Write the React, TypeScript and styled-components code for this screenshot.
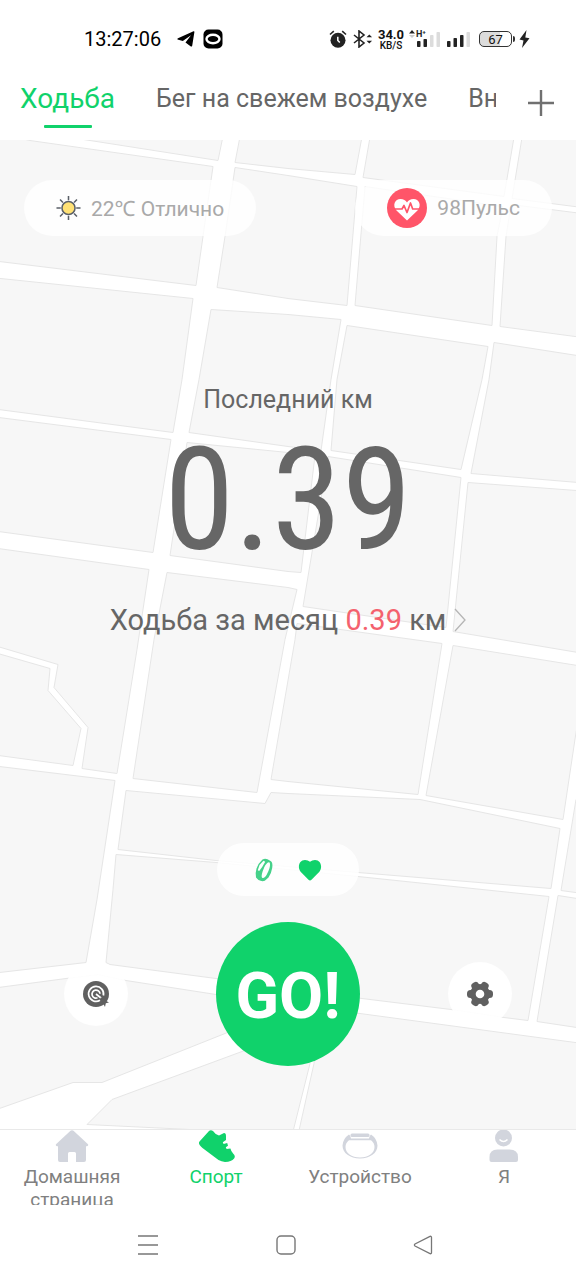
import React from "react";
import styled, { createGlobalStyle } from "styled-components";

const green = "#10d26b";
const gray = "#666666";

const GlobalStyle = createGlobalStyle`
  * { box-sizing: border-box; }
  body { margin: 0; background: #fff; font-family: Roboto, "Noto Sans", sans-serif; color: ${gray}; }
  button { border: 0; padding: 0; margin: 0; background: none; font: inherit; color: inherit; cursor: pointer; }
  a { color: inherit; text-decoration: none; }
  svg { display: block; flex: none; }
`;

const Screen = styled.div`
  display: flex;
  flex-direction: column;
  min-height: 100vh;
`;

const StatusBar = styled.header`
  display: flex;
  align-items: center;
  justify-content: space-between;
  height: 78px;
  padding: 0 46px 0 84px;
  color: #111;
`;

const StatusGroup = styled.div<{ $gap: number }>`
  display: flex;
  align-items: center;
  gap: ${(p) => p.$gap}px;
`;

const Clock = styled.time`
  font-size: 20px;
  line-height: 24px;
  margin-right: 8px;
  color: #000;
`;

const Speed = styled.div`
  display: flex;
  flex-direction: column;
  align-items: center;
  width: 28px;
  font-size: 10px;
  line-height: 10px;
  font-weight: 500;
`;

const SpeedValue = styled.span`
  font-size: 13px;
  line-height: 13px;
  font-weight: 700;
`;

const Battery = styled.div`
  display: flex;
  align-items: center;
  gap: 1px;
  margin-left: 4px;
  &::after {
    content: "";
    width: 2px;
    height: 6px;
    background: #333;
    border-radius: 0 2px 2px 0;
  }
`;

const BatteryBody = styled.div`
  width: 33px;
  height: 16px;
  border: 1px solid #333;
  border-radius: 5px;
  background: linear-gradient(90deg, #dcdcdc 64%, #fff 64%);
  font-size: 13px;
  line-height: 15px;
  text-align: center;
`;

const TabBar = styled.div`
  display: flex;
  height: 62px;
  padding: 0 22px 0 20px;
`;

const Tabs = styled.nav`
  display: flex;
  flex: 1;
  min-width: 0;
  gap: 41px;
  overflow: hidden;
  white-space: nowrap;
`;

const Tab = styled.button<{ $active?: boolean }>`
  display: flex;
  flex: none;
  flex-direction: column;
  align-items: center;
  font-size: ${(p) => (p.$active ? 28 : 25)}px;
  line-height: 42px;
  color: ${(p) => (p.$active ? green : gray)};
  &::after {
    content: "";
    width: 48px;
    height: 3px;
    margin-top: 5px;
    border-radius: 1px;
    background: ${(p) => (p.$active ? green : "transparent")};
  }
`;

const AddButton = styled.button`
  display: flex;
  align-items: center;
  justify-content: flex-end;
  width: 58px;
  height: 50px;
`;

const MapArea = styled.main`
  position: relative;
  display: flex;
  flex: 1;
  flex-direction: column;
  border-bottom: 1px solid #e9e9e9;
  overflow: hidden;
`;

const MapBackdrop = styled.svg`
  position: absolute;
  inset: 0;
  width: 100%;
  height: 100%;
`;

const Overlay = styled.div`
  position: relative;
  display: flex;
  flex: 1;
  flex-direction: column;
  padding: 40px 24px 63px;
`;

const PillRow = styled.div`
  display: flex;
  justify-content: space-between;
`;

const Pill = styled.div`
  display: flex;
  align-items: center;
  gap: 10px;
  height: 56px;
  padding: 0 32px;
  border-radius: 28px;
  background: rgba(255, 255, 255, 0.8);
  font-size: 21px;
  color: #a9a9a9;
`;

const Summary = styled.section`
  display: flex;
  flex-direction: column;
  align-items: center;
  padding-top: 146px;
`;

const SummaryTitle = styled.h1`
  margin: 0;
  font-size: 25px;
  font-weight: 400;
  line-height: 36px;
`;

const Distance = styled.div`
  font-family: "Roboto Condensed", "Liberation Sans Narrow", Roboto, sans-serif;
  font-size: 142px;
  line-height: 166px;
`;

const MonthLink = styled.a`
  display: flex;
  align-items: center;
  gap: 8px;
  margin-top: 18px;
  font-size: 29px;
  line-height: 36px;
`;

const Accent = styled.span`
  color: #f4626e;
`;

const Actions = styled.section`
  display: flex;
  flex-direction: column;
  align-items: center;
  gap: 26px;
  margin-top: auto;
`;

const DevicePill = styled.div`
  display: flex;
  align-items: center;
  justify-content: center;
  gap: 24px;
  width: 142px;
  height: 53px;
  border-radius: 27px;
  background: rgba(255, 255, 255, 0.85);
`;

const ActionRow = styled.div`
  display: flex;
  align-items: center;
  justify-content: space-between;
  width: 100%;
  padding: 0 40px;
`;

const RoundButton = styled.button`
  display: flex;
  align-items: center;
  justify-content: center;
  width: 64px;
  height: 64px;
  border-radius: 50%;
  background: rgba(255, 255, 255, 0.92);
`;

const GoButton = styled.button`
  width: 144px;
  height: 144px;
  padding-top: 6px;
  border-radius: 50%;
  background: ${green};
  color: #fff;
  font-size: 64px;
  font-weight: 700;
  line-height: 138px;
`;

const BottomNav = styled.nav`
  display: grid;
  grid-template-columns: repeat(4, 1fr);
  height: 75px;
  overflow: hidden;
`;

const NavItem = styled.a<{ $active?: boolean }>`
  display: flex;
  flex-direction: column;
  align-items: center;
  gap: 3px;
  padding: 0 16px;
  font-size: 19px;
  line-height: 23px;
  text-align: center;
  color: ${(p) => (p.$active ? green : "#808080")};
`;

const SystemNav = styled.footer`
  display: flex;
  justify-content: center;
  height: 75px;
  padding: 0 5px 0 0;
`;

const SystemButton = styled.button`
  display: flex;
  align-items: center;
  justify-content: center;
  width: 24%;
  padding-top: 5px;
`;

const blocks = [
  "90,141 30,132 224,132 218,161 90,141",
  "241,132 235,163 288,169 355,175 363,132",
  "371,132 515,132 504,197 363,178",
  "523,132 590,132 590,209 512,199",
  "-9,132 30,141 213,167 203,237 196,286 -9,261",
  "235,168 288,176 357,187 347,306 288,299 217,288 225,237",
  "365,187 503,207 497,237 492,326 355,306",
  "511,205 590,215 590,339 500,327 506,237",
  "-9,278 193,299 182,380 173,433 -9,409",
  "211,310 288,315 341,320 331,380 321,451 288,447 189,433 199,380",
  "347,326 488,347 482,380 461,470 331,451 337,380",
  "494,343 590,358 590,484 471,474 489,380",
  "-9,417 171,440 153,553 -9,531",
  "187,443 288,453 315,456 301,573 288,572 170,556",
  "328,457 461,478 446,628 303,607",
  "468,483 590,492 590,655 453,632",
  "-9,548 149,570 137,650 117,774 82,769 88,728 54,688 58,665 -9,645",
  "-9,652 50,669 48,691 81,729 73,766 -9,755",
  "167,573 288,588 297,590 285,640 257,793 133,779 154,640",
  "297,624 442,644 418,795 288,782 271,780 295,640",
  "453,646 590,668 576,733 563,820 426,796",
  "576,800 561,891 590,895 590,800",
  "-9,766 115,781 97,900 86,963 -9,974",
  "126,791 265,804 271,793 288,794 420,800 560,829 551,889 358,873 216,861 118,850",
  "116,855 216,863 358,877 549,897 528,1021 504,1018 451,1010 362,999 216,979 110,965 106,963 113,890",
  "558,896 590,901 590,1030 537,1022",
  "-9,989 66,979 98,975 126,981 216,995 290,1006 225,1034 102,1083 73,1083 -9,1112",
  "300,1030 242,1052 112,1100 87,1125 190,1130 190,1140 291,1140 310,1064",
  "320,1010 360,1014 590,1045 590,1140 297,1140 314,1064",
];

function StreetMap() {
  return (
    <MapBackdrop viewBox="0 140 576 990" preserveAspectRatio="xMidYMid slice" aria-hidden="true">
      <rect y="140" width="576" height="990" fill="#fff" />
      {blocks.map((points) => (
        <polygon key={points} points={points} fill="#f7f7f7" stroke="#e6e6e6" strokeWidth="1" />
      ))}
    </MapBackdrop>
  );
}

const Signal = ({ strong, hPlus }: { strong: number; hPlus?: boolean }) => (
  <svg width={hPlus ? 34 : 24} height="22" viewBox={hPlus ? "0 0 34 22" : "8 0 24 22"} aria-hidden="true">
    {[0, 1, 2, 3].map((i) => (
      <rect
        key={i}
        x={8 + i * 6.5}
        y={hPlus && i < 2 ? 13 - i * 2 : 13 - i * 3}
        width="3.500"
        height={hPlus && i < 2 ? 6 + i * 2 : 6 + i * 3}
        rx=".8"
        fill={i < strong ? "#222" : "#dcdcdc"}
      />
    ))}
    {hPlus && (
      <>
        <path d="M0 5.500l3-3.500 3 3.500z" fill="#222" />
        <path d="M0 7l3 3 3-3z" fill="#ccc" />
        <text x="7" y="9" fontSize="9" fontWeight="700" fill="#222">H⁺</text>
      </>
    )}
  </svg>
);

const TelegramIcon = () => (
  <svg width="18" height="18" viewBox="0 0 18 18" aria-hidden="true">
    <path d="M.5 9.500Q0 8.600 1 8.200L16.500 1.300q1-.3.900.8l-2.200 13.600q-.4 1.400-1.700.6l-5-3.900L14 5.300 5.800 11z" fill="#000" />
  </svg>
);

const BubbleIcon = () => (
  <svg width="20" height="20" viewBox="0 0 20 20" aria-hidden="true">
    <rect x=".5" y=".5" width="19" height="19" rx="5" fill="#000" />
    <ellipse cx="10" cy="10" rx="6.500" ry="4.300" fill="none" stroke="#fff" strokeWidth="2.400" />
  </svg>
);

const AlarmIcon = () => (
  <svg width="18" height="18" viewBox="0 0 18 18" aria-hidden="true">
    <circle cx="9" cy="10.200" r="7.500" fill="#222" />
    <path d="M1 4.500L4.800 1.200M17 4.500l-3.800-3.300" stroke="#222" strokeWidth="1.600" />
    <path d="M8.800 6.800v3.700l2 2" fill="none" stroke="#fff" strokeWidth="1.500" />
  </svg>
);

const BluetoothIcon = () => (
  <svg width="20" height="18" viewBox="0 0 20 18" aria-hidden="true">
    <path d="M1 5l10 8-5 4V1l5 4-10 8" fill="none" stroke="#222" strokeWidth="1.600" />
    <path d="M13.500 7.300l2.800-2.800 2.800 2.800zM13.500 10.700h5.600l-2.800 2.800z" fill="#222" />
  </svg>
);

const BoltIcon = () => (
  <svg width="11" height="18" viewBox="0 0 11 18" aria-hidden="true">
    <path d="M7.500 0L.5 9.500 4.500 10.500 3 18l7.500-9.800-4.200-.7z" fill="#222" />
  </svg>
);

const PlusIcon = () => (
  <svg width="26" height="26" viewBox="0 0 26 26" aria-hidden="true">
    <path d="M13 0v26M0 13h26" stroke="#707070" strokeWidth="2.400" />
  </svg>
);

const SunIcon = () => (
  <svg width="25" height="26" viewBox="0 0 26 26" aria-hidden="true">
    <g stroke="#5b6068" strokeWidth="1.600" fill="none">
      <circle cx="13" cy="13" r="6.800" fill="#ffe175" />
      <path d="M13 .5V5M13 21v4.500M.5 13H5M21 13h4.500M4.200 4.200l3 3M18.800 18.800l3 3M21.800 4.200l-3 3M7.200 18.800l-3 3" />
    </g>
  </svg>
);

const PulseIcon = () => (
  <svg width="40" height="40" viewBox="0 0 40 40" aria-hidden="true">
    <circle cx="20" cy="20" r="20" fill="#ff5569" />
    <path d="M20 32.500L9.500 22.500C5 17 8 11 13.500 11c3 0 5.200 1.300 6.500 3.500C21.300 12.300 23.500 11 26.500 11c5.500 0 8.500 6 4 11.500z" fill="#fff" />
    <path d="M7 21h8l2-3.500 3 7 3.500-9.500 2.200 6H33" fill="none" stroke="#ff5569" strokeWidth="1.700" strokeLinejoin="round" />
  </svg>
);

const ChevronIcon = () => (
  <svg width="12" height="24" viewBox="0 0 12 24" aria-hidden="true">
    <path d="M1 1l10 11L1 23" fill="none" stroke="#b5b5b5" strokeWidth="1.300" />
  </svg>
);

const BandIcon = () => (
  <svg width="20" height="24" viewBox="0 0 20 24" aria-hidden="true">
    <path d="M8.500 1.500Q11 .2 13.500 1.300L17 3.200Q19 5 18.200 10q-.7 5-3.700 9.500l-3.700 3.300q-3 1-6.300-.8L2 19.500q-1-4 .5-9Q4.500 5 8.500 1.500z" fill="#45d18a" />
    <path d="M15.500 4.500c1.600 2.500-.7 8.500-2.700 12-1.300 2.400-3 4-4.300 3.500-1.700-.7-.5-5.500 1.500-10 1.200-3 4-7 5.500-5.500z" fill="#fff" />
    <path d="M5.500 7L9.500 2.800l1.700.9-3 5.300-3 4-1.400-.7z" fill="#fff" />
  </svg>
);

const HeartIcon = () => (
  <svg width="24" height="22" viewBox="0 0 24 22" aria-hidden="true">
    <path d="M12 21.500q-.8 0-1.500-.7L2.600 12.700C-.8 8.500 1 1 7 1q3 0 5 1.700Q14 1 17 1c6 0 7.800 7.500 4.400 11.700l-7.900 8.100q-.7.7-1.500.7z" fill={green} />
  </svg>
);

const TargetIcon = () => (
  <svg width="28" height="28" viewBox="0 0 28 28" aria-hidden="true">
    <circle cx="14" cy="14" r="13" fill="#606060" />
    <path d="M18 20.300A7.500 7.500 0 1 1 21.400 15.500M15.500 17.800A4 4 0 1 1 18 13.800M14 14l5 4" fill="none" stroke="#fff" strokeWidth="1.700" />
    <path d="M18 17.500l9 5-3.200.8-.8 3.700z" fill="#606060" />
  </svg>
);

const GearIcon = () => (
  <svg width="28" height="28" viewBox="0 0 28 28" aria-hidden="true">
    <g fill="#606060">
      <circle cx="14" cy="14" r="10" />
      {[0, 60, 120, 180, 240, 300].map((angle) => (
        <rect key={angle} x="19" y="10" width="8" height="8" rx="3.500" transform={`rotate(${angle} 14 14)`} />
      ))}
    </g>
    <circle cx="14" cy="14" r="4.300" fill="#fff" />
  </svg>
);

const HomeIcon = () => (
  <svg width="34" height="32" viewBox="0 0 34 32" aria-hidden="true">
    <path d="M15.500.8q1.500-1.300 3 0L33 14.200q.8 1.600-1 2H31V30q0 2-2 2h-8v-8.500q0-1.500-1.500-1.500h-5Q13 22 13 23.500V32H5q-2 0-2-2V16.200H2q-1.800-.4-1-2z" fill="#d2d5dd" />
  </svg>
);

const ShoeIcon = () => (
  <svg width="37" height="32" viewBox="0 0 37 32" aria-hidden="true">
    <path d="M1.500 11.500L11 1q1.800-1.500 4 0 2.200 3.500 6 4.500L26 3q2 0 2 3v4l-3.200 2.200.8 1.700 3.600-1 .8 2.800-2.200 1.600.8 1.600 3.800-.4q.8 3 2.700 5 2.800 2.500 1 5Q33.500 31.800 27 32q-3.500-.4-6.500-2L4.500 18Q-.5 14 1.500 11.500z" fill={green} />
  </svg>
);

const WatchIcon = () => (
  <svg width="36" height="32" viewBox="0 0 36 32" aria-hidden="true">
    <path fillRule="evenodd" d="M7 4.500Q8.500 5.500 9 8.500h18q.5-3 2-4Q35 8.500 35.500 15.500C35.500 23 28 28.500 18 28.500S.5 23 .5 15.500Q1 8.500 7 4.500zM7 10.300Q3.500 13 3.500 17c0 6 6 10.500 14.500 10.500S32.500 23 32.500 17q0-4-3.500-6.700z" fill="#d2d5dd" />
    <rect x="8.500" y="3.500" width="19" height="3.500" rx="1.500" fill="#d2d5dd" />
  </svg>
);

const PersonIcon = () => (
  <svg width="30" height="32" viewBox="0 0 30 32" aria-hidden="true">
    <circle cx="14.500" cy="8" r="8.500" fill="#d2d5dd" />
    <path d="M10.500 9.500q4 4 8 0" fill="none" stroke="#fff" strokeWidth="1.600" />
    <path d="M.5 30v-3q0-7.500 8-7.500h12q8.500 0 8.500 7.500v3q0 2-2 2H2.500q-2 0-2-2z" fill="#d2d5dd" />
  </svg>
);

const navItems = [
  { label: "Домашняя страница", icon: <HomeIcon /> },
  { label: "Спорт", icon: <ShoeIcon />, active: true },
  { label: "Устройство", icon: <WatchIcon /> },
  { label: "Я", icon: <PersonIcon /> },
];

export default function App() {
  return (
    <Screen>
      <GlobalStyle />
      <StatusBar>
        <StatusGroup $gap={8}>
          <Clock>13:27:06</Clock>
          <TelegramIcon />
          <BubbleIcon />
        </StatusGroup>
        <StatusGroup $gap={4}>
          <StatusGroup $gap={6}>
            <AlarmIcon />
            <BluetoothIcon />
          </StatusGroup>
          <Speed>
            <SpeedValue>34.0</SpeedValue>
            <span>KB/S</span>
          </Speed>
          <Signal strong={2} hPlus />
          <Signal strong={3} />
          <Battery>
            <BatteryBody>67</BatteryBody>
          </Battery>
          <BoltIcon />
        </StatusGroup>
      </StatusBar>
      <TabBar>
        <Tabs>
          <Tab $active>Ходьба</Tab>
          <Tab>Бег на свежем воздухе</Tab>
          <Tab>Внутри</Tab>
        </Tabs>
        <AddButton aria-label="Добавить">
          <PlusIcon />
        </AddButton>
      </TabBar>
      <MapArea>
        <StreetMap />
        <Overlay>
          <PillRow>
            <Pill>
              <SunIcon />
              <span>22℃ Отлично</span>
            </Pill>
            <Pill>
              <PulseIcon />
              <span>98Пульс</span>
            </Pill>
          </PillRow>
          <Summary>
            <SummaryTitle>Последний км</SummaryTitle>
            <Distance>0.39</Distance>
            <MonthLink href="#month">
              <span>
                Ходьба за месяц <Accent>0.39</Accent> км
              </span>
              <ChevronIcon />
            </MonthLink>
          </Summary>
          <Actions>
            <DevicePill>
              <BandIcon />
              <HeartIcon />
            </DevicePill>
            <ActionRow>
              <RoundButton aria-label="Цель">
                <TargetIcon />
              </RoundButton>
              <GoButton>GO!</GoButton>
              <RoundButton aria-label="Настройки">
                <GearIcon />
              </RoundButton>
            </ActionRow>
          </Actions>
        </Overlay>
      </MapArea>
      <BottomNav>
        {navItems.map((item) => (
          <NavItem key={item.label} href="#nav" $active={item.active}>
            {item.icon}
            <span>{item.label}</span>
          </NavItem>
        ))}
      </BottomNav>
      <SystemNav>
        <SystemButton aria-label="Меню">
          <svg width="20" height="20" viewBox="0 0 20 20" aria-hidden="true">
            <path d="M0 1h20M0 10h20M0 19h20" stroke="#777" strokeWidth="1.500" />
          </svg>
        </SystemButton>
        <SystemButton aria-label="Домой">
          <svg width="20" height="20" viewBox="0 0 20 20" aria-hidden="true">
            <rect x="1" y="1" width="18" height="18" rx="4" fill="none" stroke="#777" strokeWidth="1.400" />
          </svg>
        </SystemButton>
        <SystemButton aria-label="Назад">
          <svg width="20" height="20" viewBox="0 0 20 20" aria-hidden="true">
            <path d="M17 1.300L2 9q-1.200 1 0 2l15 7.700q1.500.3 1.500-1.200v-15Q18.500 1 17 1.300z" fill="none" stroke="#777" strokeWidth="1.300" />
          </svg>
        </SystemButton>
      </SystemNav>
    </Screen>
  );
}
